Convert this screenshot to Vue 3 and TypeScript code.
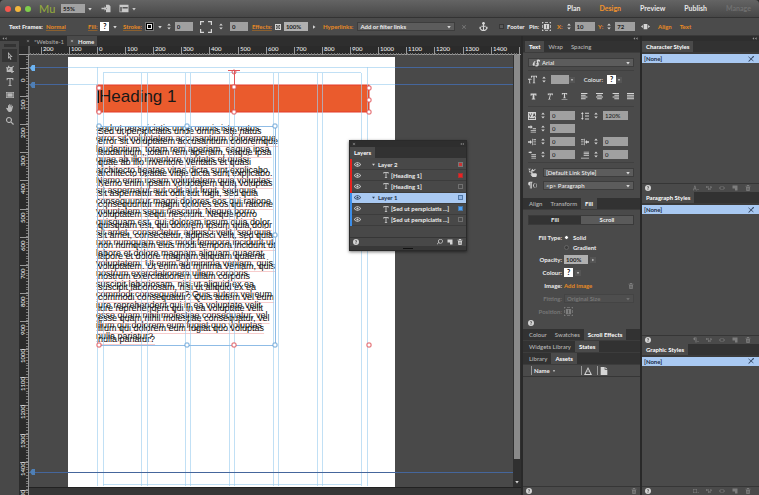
<script setup lang="ts">
import { h, ref } from 'vue'

const icons: Record<string, string> = {
  down: 'M2.5 4h7L6 9z',
  right: 'M4 2.5v7L9 6z',
  step: 'M6 0l3.5 4h-7zM6 12l3.5-4h-7z',
  close: 'M2 3l1-1 3 3 3-3 1 1-3 3 3 3-1 1-3-3-3 3-1-1 3-3z',
  collapse: 'M1 6l4-3v6zM7 6l4-3v6z',
  place: 'M0 5h4V3l3 3-3 3V7H0zM6 1h4l2 2v8H6z',
  browser: 'M0 1h12v10H0V1zm1 3v6h2V4zm3 0v2h7V4z',
  brackets: 'M0 0h4v1.2H1.2V4H0zM8 0h4v4h-1.2V1.2H8zM0 8h1.2v2.8H4V12H0zM10.8 8H12v4H8v-1.2h2.8z',
  checker: 'M0 0h12v12H0zM2 2v3h3V2zm5 0v3h3V2zM4.5 4.5v3h3v-3zM2 7v3h3V7zm5 0v3h3V7z',
  anchor: 'M5.3 3.5a1.8 1.8 0 1 1 1.4 0V5H9v1.2H6.700V10.500c1.600-.3 2.700-1.200 3-2.500L8.600 8l2-2.500L12 8.500h-1.100C10.300 10.800 8.300 12 6 12S1.700 10.800 1.100 8.500H0L1.400 5.500l2 2.500h-1.100c.3 1.300 1.400 2.200 3 2.500V6.200H3V5h2.300z',
  pin: 'M0 0h2v1H1v1H0zM4 0h4v1H4zM10 0h2v2h-1V1h-1zM0 4h1v4H0zM11 4h1v4h-1zM0 10h1v1h1v1H0zM4 11h4v1H4zM11 10h1v2h-2v-1h1zM2.500 2.500h7v7h-7zm3 1v5h1v-5z',
  stretch: 'M0 6l2.500-2v4zM12 6L9.500 4v4zM3.500 2.500h5v7h-5z',
  arrow: 'M3 0l7 7.500H6.500L8.300 11 6.600 12 5 8.300 3 10.500zM4.200 3v4.500l.9-1 .8.2h1.400z',
  crop: 'M3 1h2v2h4L11 1l1 1-2 2v5h2v1.500h-2V12H8v-1.500H1V5H0V3.500h3zM3.500 5l3 0-3 3z',
  type: 'M1 0h10v3.300H9.800L9.300 1.500H6.800v9l1.600.3V12H3.600v-1.200l1.600-.3v-9H2.700L2.200 3.300H1z',
  rect: 'M0 1.500h12v9H0zM1 2.500v7h10v-7zM2 3.500h8v5H2z',
  hand: 'M3 6V2.200c0-1 1.300-1 1.400 0L4.800 5V1c0-1.300 1.500-1.300 1.500 0v4L7 1.500c.2-1 1.500-.8 1.400.2L8 5.500l1.200-2.300c.6-.9 1.600-.3 1.300.6L9 9.500C8.600 11.300 7.700 12 6 12c-2 0-2.700-.7-3.500-2L.3 6.700c-.5-1 .8-1.700 1.500-.8z',
  zoom: 'M4.500 0a4.500 4.500 0 0 1 3.700 7L12 10.600 10.600 12 7 8.200A4.500 4.500 0 1 1 4.500 0zm0 1.600a2.900 2.900 0 1 0 0 5.800 2.900 2.900 0 0 0 0-5.800z',
  size: 'M4 1h8v2.500h-1L10.500 2H8.700v8l1 .3V11H6.300v-.7l1-.3V2H5.500L5 3.500H4zM0 5h4.500v1.700H4L3.500 6H2.800v4.300l.7.200V11H1v-.5l.7-.2V6H1l-.5.7H0z',
  bold: 'M1 1h10v3.500H9.500L9 3H7.500v6.500L9 10v1.200H3V10l1.500-.5V3H3L2.500 4.500H1z',
  italic: 'M3 1h9l-.6 3h-1l-.1-1.600H8.300L6.600 9.700l1.400.4-.2 1H3.500l.2-1 1.400-.4 1.700-7.300H5L4.200 4h-1z',
  under: 'M1.500 0h9v3h-1L9 1.400H7v6.500l1.300.3V9H3.700v-.8L5 7.900V1.400H3L2.500 3h-1zM1 10.500h10v1H1z',
  left: 'M0 0h11v1.500H0zM0 3h8v1.500H0zM0 6h11v1.500H0zM0 9h8v1.500H0z',
  center: 'M0 0h12v1.500H0zM2 3h8v1.500H2zM0 6h12v1.500H0zM2 9h8v1.500H2z',
  rightal: 'M1 0h11v1.500H1zM4 3h8v1.500H4zM1 6h11v1.500H1zM4 9h8v1.500H4z',
  justify: 'M0 0h12v1.500H0zM0 3h12v1.500H0zM0 6h12v1.500H0zM0 9h12v1.500H0z',
  track: 'M0 0h12v12H0zM1 2l2 5h1l2-5H5L3.500 5.500 2 2zm6 5h1l.4-1h1.700l.4 1h1L9.700 2h-.9zM1 9.500L3 8v1h6V8l2 1.500L9 11v-1H3v1z',
  leading: 'M2 0l2 3H2.600v6H4l-2 3-2-3h1.400V3H0zM6 1h6v1.500H6zM6 5.300h6v1.500H6zM6 9.600h6v1.500H6z',
  indent: 'M0 2h4V0l3 3-3 3V4H0zM7 5h5v1.200H7zM4 7.500h8v1.200H4zM4 10h8v1.200H4z',
  marginl: 'M0 5h3V3l3 3-3 3V7H0zM6 1h1v10H6zM8 2h4v1.200H8zM8 5.300h4v1.200H8zM8 8.600h4v1.200H8z',
  marginr: 'M12 5H9V3L6 6l3 3V7h3zM5 1h1v10H5zM0 2h4v1.200H0zM0 5.300h4v1.200H0zM0 8.600h4v1.200H0z',
  before: 'M1 1h3V0l2 2-2 2V3H1zM5 5h7v1.200H5zM5 7.500h7v1.200H5zM5 10h7v1.200H5z',
  after: 'M4 1h8v1.200H4zM4 3.500h8v1.200H4zM4 6h8v1.200H4zM0 10h12v1.300H0z',
  link: 'M0 1l2 1.500L4 1M1 3l2 1 1 2H2zM6 1l1 2 3-2v1L8 4l-2 1-2-1zM4 4h2v3h5l1 2-1 3H6L3 8.500h1.500z',
  para: 'M2.500 1H6v1H5v8H4V2H3.500v8h-1V6C-.5 6-.5 1 2.500 1zM8 3L6.500 6 8 9h1L7.700 6 9 3zM10 3l1.300 3L10 9h.8L12 6l-1.200-3z',
  script: 'M1 8c1-3 2-5 4-5v2H4v5H2L1 9zM6 7c3-1 1-3 1-4 0-2 3-3 5-1v2c-2-1-3-1-3 0s2 2 1 5-5 3-5 1 2 0 3-1-2-1-2-2z',
  trash: 'M4 0h4v1.300h3v1.500H1V1.300h3zM2 4h8l-.7 8H2.700zM4 5.500v5h.8v-5zm3.200 0v5H8v-5z',
  page: 'M1 1h10v10H6V7H1z',
  fold: 'M1 0h6v4h4v8H1zM8 0l3 3H8z',
  warn: 'M6 0l6 12H0zM6 3L2.500 10.500h7zM5.500 5.500h1v2.500h-1z',
  help: 'M6 0a6 6 0 1 1 0 12A6 6 0 0 1 6 0zM3.800 4.500h1.400c0-1.300 1.700-1.200 1.500-.1C6.500 5.300 5 5.500 5.200 7.300h1.400c0-1.400 1.700-1.500 1.600-3.200C8 1.700 4 1.700 3.800 4.500zM5.100 8.200v1.500h1.600V8.200z',
  eye: 'M0 6c3-5 9-5 12 0-3 5-9 5-12 0zm1.600 0c2.200 3.300 6.600 3.300 8.800 0-2.200-3.300-6.600-3.300-8.800 0zM6 4.200a1.800 1.800 0 1 1 0 3.600 1.800 1.800 0 0 1 0-3.600z',
  pencil: 'M0 1h1l5 4 3-4 3-1v2L9 4 7.500 6 11 10v1L6.300 7 2.500 11H0l5-5z',
  charplus: 'M0 11L3 1h1.500l3 10H6L5.200 8.500h-3L1.400 11zM2.600 7.200h2.200L3.700 3.300zM8 8h4v1.200H8z',
  paraplus: 'M3 1h4v10H6V2.200H5V11H4V6.500C0 6.500 0 1 3 1zM8 8h4v1.200H8z',
  boxplus: 'M0 2h8v8H0zM1 3v6h6V3zM9 8h3v1H9z',
  chain: 'M0 2h5v4H0zM1 3v2h3V3zM4 6h5v4H4zM5 7v2h3V7zM9 2l3 2-2 3V5L8 6z',
  clear: 'M3 3L0 6l3 3h1.500L2 6l2.500-3zM9 3l3 3-3 3H7.500L10 6 7.500 3zM4.500 2h3v1h-3zM4.500 9h3v1h-3z',
  find: 'M7 0a4.500 4.500 0 1 1-3.500 7.300L1 11 0 10l2.800-3.500A4.500 4.500 0 0 1 7 0zm0 1.200a3.300 3.300 0 1 0 0 6.600 3.300 3.300 0 0 0 0-6.600z',
}
const Icon = (p: { n: string }) =>
  h('svg', { class: 'ic', viewBox: '0 0 12 12', 'aria-hidden': 'true' }, [
    h('path', { d: icons[p.n], 'fill-rule': 'evenodd' }),
  ])
Icon.props = ['n']

const modes = ['Plan', 'Design', 'Preview', 'Publish', 'Manage']
const tools = ['arrow', 'crop', 'type', 'rect', 'hand', 'zoom']
const tool = ref('arrow')

// 100 document units cover this many screen pixels at the current zoom
const unit = 28.12
const at = (i: number) => Math.round(i * unit)
const topMarks = Array.from({ length: 18 }, (_, k) => ({ x: 97 + at(k - 2), n: Math.abs(k - 2) * 100 }))
const sideMarks = Array.from({ length: 16 }, (_, k) => ({ y: 68 + at(k), n: k * 100 }))
const minor = Array.from({ length: 180 }, (_, k) => at(k / 10))

const guideX = [97, 103, 141, 147, 185, 190, 229, 234, 273, 278, 317, 322, 361, 367]
const redHandles = [[99, 88], [99, 112], [234, 87], [234, 112], [369, 88], [369, 100], [369, 112], [99, 345], [234, 345], [369, 345]]
const blueHandles = [[99, 126], [187, 126], [275, 126], [275, 235], [187, 345], [275, 345]]

const lines = [
  'Sed ut perspiciatis unde omnis iste natus',
  'error sit voluptatem accusantium doloremque',
  'laudantium, totam rem aperiam, eaque ipsa',
  'quae ab illo inventore veritatis et quasi',
  'architecto beatae vitae dicta sunt explicabo.',
  'Nemo enim ipsam voluptatem quia voluptas',
  'sit aspernatur aut odit aut fugit, sed quia',
  'consequuntur magni dolores eos qui ratione',
  'voluptatem sequi nesciunt. Neque porro',
  'quisquam est, qui dolorem ipsum quia dolor',
  'sit amet, consectetur, adipisci velit, sed quia',
  'non numquam eius modi tempora incidunt ut',
  'labore et dolore magnam aliquam quaerat',
  'voluptatem. Ut enim ad minima veniam, quis',
  'nostrum exercitationem ullam corporis',
  'suscipit laboriosam, nisi ut aliquid ex ea',
  'commodi consequatur? Quis autem vel eum',
  'iure reprehenderit qui in ea voluptate velit',
  'esse quam nihil molestiae consequatur, vel',
  'illum qui dolorem eum fugiat quo voluptas',
  'nulla pariatur?',
]

const layers = [
  { name: 'Layer 2', group: true, tone: 'red', mark: 'small' },
  { name: '[Heading 1]', group: false, tone: 'red', mark: 'full' },
  { name: '[Heading 1]', group: false, tone: 'red', mark: '' },
  { name: 'Layer 1', group: true, tone: 'blue', mark: 'small', active: true },
  { name: '[Sed ut perspiciatis ...]', group: false, tone: 'blue', mark: 'full' },
  { name: '[Sed ut perspiciatis ...]', group: false, tone: 'blue', mark: '' },
]

const metrics = [
  { icon: 'track', label: 'Tracking', value: '0' },
  { icon: 'leading', label: 'Leading', value: '120%' },
  { icon: 'indent', label: 'Indent', value: '0' },
  null,
  { icon: 'marginl', label: 'Left margin', value: '0' },
  { icon: 'marginr', label: 'Right margin', value: '0' },
  { icon: 'before', label: 'Space before', value: '0' },
  { icon: 'after', label: 'Space after', value: '0' },
]

const tabRows = [
  { tabs: ['Colour', 'Swatches', 'Scroll Effects'], on: 2 },
  { tabs: ['Widgets Library', 'States'], on: 1 },
  { tabs: ['Library', 'Assets'], on: 1 },
]
const stylePanels = [
  { title: 'Character Styles', icon: 'charplus' },
  { title: 'Paragraph Styles', icon: 'paraplus' },
  { title: 'Graphic Styles', icon: 'boxplus' },
]
</script>

<template>
  <div class="app">
    <header class="title">
      <div class="lights"><i class="r"></i><i class="y"></i><i class="g"></i></div>
      <span class="logo">Mu</span>
      <span class="pick zoompick"><select aria-label="Zoom"><option>55%</option></select><Icon n="down" /></span>
      <button class="plain" aria-label="Place"><Icon n="place" /></button>
      <button class="plain" aria-label="View"><Icon n="browser" /><Icon n="down" /></button>
      <nav>
        <a v-for="m in modes" :key="m" href="#" :class="{ on: m === 'Design', off: m === 'Manage' }">{{ m }}</a>
      </nav>
    </header>

    <div class="control">
      <div><b>Text Frames:</b><a href="#">Normal</a></div>
      <div><a href="#">Fill:</a><button class="swatch" aria-label="Fill colour">?</button><Icon n="down" /></div>
      <div>
        <a href="#">Stroke:</a><button class="swatch dark" aria-label="Stroke colour"><i></i></button><Icon n="down" />
        <button class="step" aria-label="Step stroke"><Icon n="step" /></button><input aria-label="Stroke width" value="0" />
      </div>
      <div class="corner">
        <Icon n="brackets" class="big" />
        <button class="step" aria-label="Step radius"><Icon n="step" /></button><input aria-label="Corner radius" value="0" />
      </div>
      <div><a href="#">Effects:</a><Icon n="checker" /><input aria-label="Effect opacity" class="sel" value="100%" /><Icon n="right" /></div>
      <div class="tight"><a href="#">Hyperlinks:</a><span class="pick wide"><select aria-label="Hyperlink"><option>Add or filter links</option></select><Icon n="down" /></span></div>
      <div class="spread"><Icon n="close" class="dim" /><Icon n="anchor" class="mid" /></div>
      <div><label class="check"><input type="checkbox" />Footer</label></div>
      <div><span>Pin:</span><Icon n="pin" class="mid" /></div>
      <div class="coord"><label class="hot" for="px">X:</label><button class="step" aria-label="Step X"><Icon n="step" /></button><input id="px" value="10" /></div>
      <div class="coord"><label class="hot" for="py">Y:</label><button class="step" aria-label="Step Y"><Icon n="step" /></button><input id="py" value="72" /></div>
      <div class="last"><Icon n="stretch" class="mid" /><a href="#">Align</a><a href="#">Text</a></div>
    </div>

    <main>
      <aside class="tools">
        <div class="strip"><Icon n="collapse" /></div>
        <div class="grip"></div>
        <button v-for="t in tools" :key="t" :class="{ on: t === tool }" :aria-label="t" @click="tool = t"><Icon :n="t" /></button>
      </aside>

      <section class="doc">
        <div class="doctabs">
          <button><Icon n="close" />*Website-1</button>
          <button class="on"><Icon n="close" />Home</button>
        </div>
        <div class="rulers">
          <svg class="ruler top">
            <g transform="translate(-19 0)">
              <path class="line" d="M29 0V9M19 8.500H530" />
              <path v-for="m in minor" :key="m" class="tick" :d="`M${m + 30}.500 7v2`" />
              <g v-for="m in topMarks" :key="m.x">
                <path class="line" :d="`M${m.x}.500 1v8`" />
                <text :x="m.x + 2" y="5">{{ m.n }}</text>
              </g>
            </g>
          </svg>
          <svg class="ruler side">
            <g transform="translate(-19 -55)">
              <path class="line" d="M28.500 55V500" />
              <path v-for="m in minor" :key="m" class="tick" :d="`M26 ${m + 56}.500h2`" />
              <g v-for="m in sideMarks" :key="m.y">
                <path class="line" :d="`M20 ${m.y}.500h8`" />
                <text :transform="`translate(25 ${m.y + 14}) rotate(-90)`">{{ m.n }}</text>
              </g>
            </g>
          </svg>
          <div class="canvas">
            <svg class="layer">
              <g transform="translate(-29 -55)">
                <rect x="68" y="57" width="327" height="430" fill="#fff" />
                <rect x="97" y="85" width="272" height="27" fill="#ea5b2d" stroke="#e43a2a" />
                <rect x="97" y="90" width="2" height="13" fill="#111" />
              </g>
            </svg>
            <h1>Heading 1</h1>
            <div class="copy back"><p v-for="l in lines" :key="l"><span>{{ l }}</span></p></div>
            <div class="copy"><p v-for="l in lines" :key="l"><span>{{ l }}</span></p></div>
            <svg class="layer">
              <g transform="translate(-29 -55)">
                <path v-for="x in guideX" :key="x" class="guide" :d="`M${x}.500 ${x === 97 || x === 367 ? 67 : 73}V486`" />
                <path class="guide" d="M103 72.500H361M103 484.500H361" />
                <path class="guide" d="M68 67.500H395M68 84.500H97M369 84.500H395" />
                <path class="deep" d="M29 67.500H68M29 84.500H68M395 67.500H514M395 84.500H514M29 472.500H514" />
                <path class="frame" d="M97.500 126V345M99 126.500H275.500V345.500H99" />
                <path class="pinline" d="M228 70.500H240M234.500 70V87" />
                <circle class="pinline" cx="234" cy="72" r="2" />
                <g v-for="y in [68, 85, 472]" :key="y">
                  <path :class="y === 68 ? 'knob bright' : 'knob'" :d="`M30 ${y}l2-3h3v6h-3z`" />
                </g>
                <rect v-for="p in redHandles" :key="p.join()" class="hr" :x="p[0] - 2" :y="p[1] - 2" width="4" height="4" rx="1" />
                <rect v-for="p in blueHandles" :key="p.join()" class="hb" :x="p[0] - 2" :y="p[1] - 2" width="4" height="4" rx="1" />
              </g>
            </svg>
          </div>
          <div class="scroll"><i></i><Icon n="down" /></div>
          <div class="status"></div>
        </div>

        <section class="layers">
          <div class="lhead"><Icon n="close" /><Icon n="collapse" /></div>
          <div class="tabs"><button class="on">Layers</button></div>
          <ul>
            <li v-for="(l, i) in layers" :key="i" :class="[l.tone, { active: l.active }]">
              <i class="bar"></i>
              <span class="see"><Icon n="eye" /></span>
              <span class="lname" :class="{ child: !l.group }"><Icon :n="l.group ? 'down' : 'type'" />{{ l.name }}</span>
              <i class="mark" :class="l.mark"></i>
            </li>
          </ul>
          <div class="lfoot"><Icon n="help" /><span></span><Icon n="find" /><Icon n="page" /><Icon n="trash" /></div>
          <div class="lgrip"><i></i></div>
        </section>
      </section>

      <aside class="panels">
        <div class="strip end"><Icon n="collapse" /></div>
        <div class="tabs"><button class="on">Text</button><button>Wrap</button><button>Spacing</button></div>
        <div class="text">
          <span class="pick font"><Icon n="script" /><select aria-label="Font"><option>Arial</option></select><Icon n="down" /></span>
          <hr />
          <div class="row fontrow">
            <Icon n="size" class="mid" /><button class="step" aria-label="Step size"><Icon n="step" /></button>
            <span class="combo"><input aria-label="Font size" /><Icon n="down" class="boxed" /></span>
            <span class="lab">Colour:</span><span class="combo"><button class="swatch" aria-label="Text colour">?</button><Icon n="down" class="boxed" /></span>
          </div>
          <div class="row glyphs">
            <button v-for="g in ['bold', 'italic', 'under', 'left', 'center', 'rightal', 'justify']" :key="g" :aria-label="g"><Icon :n="g" /></button>
          </div>
          <hr />
          <div class="metrics">
            <div v-for="(m, i) in metrics" :key="i">
              <template v-if="m">
                <Icon :n="m.icon" /><button class="step" :aria-label="'Step ' + m.label"><Icon n="step" /></button><input :aria-label="m.label" :value="m.value" />
              </template>
            </div>
          </div>
          <hr />
          <div class="row linkrow"><Icon n="link" class="mid" /><span class="pick"><select aria-label="Link style"><option>[Default Link Style]</option></select><Icon n="down" /></span></div>
          <div class="row linkrow"><Icon n="para" class="mid" /><span class="pick"><select aria-label="Paragraph tag"><option>&lt;p&gt; Paragraph</option></select><Icon n="down" /></span></div>
        </div>
        <div class="tabs"><button>Align</button><button>Transform</button><button class="on">Fill</button></div>
        <div class="fill">
          <div class="seg"><button class="on">Fill</button><button>Scroll</button></div>
          <div class="form">
            <span class="k">Fill Type:</span>
            <div class="radios">
              <label><input type="radio" name="ft" checked />Solid</label>
              <label><input type="radio" name="ft" />Gradient</label>
            </div>
            <label class="k" for="op">Opacity:</label><div class="v"><input id="op" class="sel" value="100%" /><Icon n="right" class="boxed" /></div>
            <span class="k">Colour:</span><div class="v"><button class="swatch" aria-label="Colour">?</button><Icon n="down" class="boxed" /></div>
            <span class="k">Image:</span><div class="v apart"><a href="#">Add image</a><Icon n="trash" class="dim" /></div>
            <label class="k off" for="fit">Fitting:</label><div class="v"><span class="pick off"><select id="fit" disabled><option>Original Size</option></select><Icon n="down" /></span></div>
            <span class="k off">Position:</span><div class="v"><Icon n="pin" class="dim mid" /></div>
          </div>
          <Icon n="help" class="q" />
        </div>
        <div v-for="r in tabRows" :key="r.on + r.tabs[0]" class="tabs">
          <button v-for="(t, i) in r.tabs" :key="t" :class="{ on: i === r.on }">{{ t }}</button>
        </div>
        <div class="cols"><span class="name">Name <Icon n="down" /></span><span><Icon n="warn" /></span><span><Icon n="fold" /></span></div>
        <div class="empty"></div>
        <div class="foot"><Icon n="help" /><span></span><Icon n="trash" class="dim" /></div>
      </aside>

      <aside class="styles">
        <div class="strip end"><Icon n="collapse" /></div>
        <section v-for="s in stylePanels" :key="s.title">
          <div class="tabs"><button class="on">{{ s.title }}</button></div>
          <div class="list"><button class="item">[None]<Icon n="pencil" /></button></div>
          <div class="foot">
            <Icon n="help" /><span></span><Icon :n="s.icon" class="dim" /><Icon n="chain" class="dim" /><Icon n="clear" class="dim" /><Icon n="page" class="dim" /><Icon n="trash" class="dim" />
          </div>
        </section>
      </aside>
    </main>
  </div>
</template>

<style>
body { background: #2b2b2b; overflow: hidden; }
</style>

<style scoped>
* { box-sizing: border-box; }
.app { height: 100vh; display: flex; flex-direction: column; font: 500 6px/9px Lato, "Open Sans", sans-serif; color: #eee; background: #2c2c2c; border-radius: 4px 4px 0 0; overflow: hidden; }
button, input, select { font: inherit; color: inherit; border: 0; padding: 0; margin: 0; background: none; border-radius: 0; outline: 0; }
a { color: #e88a25; text-decoration: none; }
.ic { width: 6px; height: 6px; flex: none; fill: currentColor; display: block; opacity: .85; }
.ic.mid { width: 9px; height: 9px; }
.ic.big { width: 12px; height: 12px; }
.ic.dim { color: #868686; }

.title { flex: 0 0 18px; display: flex; align-items: center; gap: 8px; padding: 0 8px 0 5px; background: linear-gradient(#646464, #474747); border-bottom: 1px solid #333; }
.lights { display: flex; gap: 4px; }
.lights i { width: 6px; height: 6px; border-radius: 50%; }
.lights .r { background: #f4574e; }
.lights .y { background: #f4b73c; }
.lights .g { background: #7fce4b; }
.logo { font-size: 11px; color: #93a83d; width: 14px; }
.pick { display: flex; align-items: center; height: 9px; background: #5c5c5c; border: 1px solid #3d3d3d; padding-right: 2px; min-width: 0; flex: 1; }
.pick select { appearance: none; flex: 1; min-width: 0; height: 7px; line-height: 7px; padding-left: 2px; }
.zoompick { flex: none; width: 32px; background: none; border: 0; padding: 0; gap: 2px; }
.zoompick select { background: #a2a2a2; color: #222; height: 9px; font-weight: bold; }
.plain { display: flex; align-items: center; gap: 2px; color: #ddd; }
.plain .ic:first-child { width: 10px; height: 9px; }
nav { margin-left: auto; display: flex; gap: 19px; font-size: 7px; font-weight: bold; }
nav a { color: #e8e8e8; }
nav a.on { color: #f2932c; }
nav a.off { color: #707070; }

.control { flex: 0 0 18px; display: grid; grid-template-columns: 79px 35px 77px 52px 71px 136px 40px 30px 28px 41px 41px 1fr; padding-left: 9px; background: #4b4b4b; border-bottom: 1px solid #3a3a3a; font-weight: bold; }
.control > div { display: flex; align-items: center; gap: 3px; min-width: 0; }
.control > .corner { gap: 6px; }
.control > .spread { gap: 12px; padding-left: 2px; }
.control > .tight { gap: 4px; padding-right: 4px; }
.control > .last { gap: 8px; padding-left: 2px; }
.control a { text-decoration: underline; text-decoration-color: #8a6030; }
.control .last a, .control .tight a { text-decoration: none; }
input { width: 18px; height: 9px; background: #a0a0a0; color: #222; padding-left: 2px; min-width: 0; }
input.sel { width: 24px; background: #b0b0b0; }
.coord input { width: 20px; }
.hot { color: #e88a25; }
.step { display: flex; color: #eee; }
.step .ic { width: 6px; height: 7px; }
.swatch { width: 9px; height: 9px; background: #fff; color: #000; font-weight: bold; font-size: 7px; line-height: 9px; flex: none; text-align: center; }
.swatch.dark { background: #000; border: 1px solid #777; display: flex; align-items: center; justify-content: center; }
.swatch.dark i { width: 5px; height: 5px; border: 1px solid #eee; }
.check { display: flex; align-items: center; gap: 3px; }
.check input { appearance: none; width: 5px; height: 5px; background: #5a5a5a; border: 1px solid #383838; padding: 0; }

main { flex: 1; min-height: 0; display: grid; grid-template-columns: 19px 1fr 117px 117px; gap: 0 2px; background: #292929; }
.strip { height: 5px; background: #2e2e2e; display: flex; align-items: center; color: #aaa; padding: 0 2px; }
.strip .ic { width: 5px; height: 5px; }
.strip.end { justify-content: flex-end; }
.tools { background: #484848; display: flex; flex-direction: column; align-items: center; margin-right: -2px; border-right: 2px solid #303030; }
.tools .strip { align-self: stretch; }
.grip { width: 12px; height: 3px; background: #333; margin: 3px 0 2px; }
.tools button { width: 15px; height: 13px; display: flex; align-items: center; justify-content: center; color: #ccc; }
.tools button .ic { width: 8px; height: 8px; }
.tools button.on { background: #353535; }

.doc { display: flex; flex-direction: column; min-width: 0; position: relative; margin-left: -2px; }
.doctabs { flex: 0 0 10px; display: flex; padding-left: 4px; background: #2e2e2e; }
.doctabs button { display: flex; align-items: center; gap: 4px; padding: 0 3px; color: #aaa; }
.doctabs button .ic { width: 4px; height: 4px; }
.doctabs .on { background: #4a4a4a; color: #eee; font-weight: bold; }
.rulers { flex: 1; min-height: 0; display: grid; grid-template: 9px 1fr 8px / 10px 1fr 8px; background: #2b2b2b; }
.ruler { display: block; width: 100%; height: 100%; overflow: hidden; fill: #eee; }
.ruler.top { grid-column: 1 / 4; }
.ruler.side { grid-row: 2 / 4; }
.line { stroke: #999; fill: none; }
.tick { stroke: #777; }
.canvas { position: relative; overflow: hidden; background: #494949; }
.layer { position: absolute; inset: 0; width: 100%; height: 100%; }
.scroll { background: #303030; display: flex; flex-direction: column; align-items: center; justify-content: space-between; padding-bottom: 2px; }
.scroll i { width: 6px; height: 94%; background: #8a8a8a; }
.status { grid-column: 2 / 4; background: #363636; border-top: 1px solid #222; }
h1 { position: absolute; left: 70px; top: 32px; margin: 0; font: 17px/20px "Liberation Sans", sans-serif; color: #181818; }
.copy { position: absolute; left: 69px; top: 71px; height: 218px; display: flex; flex-direction: column; justify-content: space-between; font: 9px/10px "Liberation Sans", sans-serif; color: #111; white-space: nowrap; }
.copy.back { left: 67px; top: 68px; }
.copy p { margin: 0; }
.copy span { text-decoration: underline; text-decoration-color: #f0a0a088; text-underline-offset: 2px; text-decoration-thickness: 1px; }
.guide { stroke: #9fd0f0; stroke-opacity: .65; fill: none; }
.deep { stroke: #45669c; }
.frame { stroke: #8fbce6; fill: none; }
.pinline { stroke: #e0555a; fill: none; }
.knob { fill: #4f7fb5; }
.bright { fill: #6db4f2; }
.hr { fill: #fff; stroke: #e0555a; }
.hb { fill: #fff; stroke: #6aa5d8; }

.tabs { flex: 0 0 11px; display: flex; background: #323232; color: #b8b8b8; padding-left: 2px; }
.tabs button { padding: 0 4px; line-height: 11px; }
.tabs .on { background: #4a4a4a; color: #fff; font-weight: bold; }

.layers { position: absolute; left: 330px; top: 104px; width: 118px; height: 111px; display: flex; flex-direction: column; background: #484848; border: 1px solid #2a2a2a; box-shadow: 0 1px 3px #0008; }
.lhead { flex: 0 0 6px; background: #2e2e2e; display: flex; justify-content: space-between; align-items: center; padding: 0 2px; color: #bbb; }
.lhead .ic { width: 4px; height: 4px; }
.layers .tabs { padding-left: 0; flex-basis: 10px; }
.layers ul { list-style: none; margin: 1px 0 11px; padding: 0; flex: 1; display: flex; flex-direction: column; font-weight: bold; }
.layers li { flex: 1; display: flex; align-items: center; border-bottom: 1px solid #3c3c3c; }
.bar { width: 2px; align-self: stretch; background: #e8231f; margin-bottom: -1px; }
.blue .bar { background: #3c8eea; }
.see { width: 19px; padding-left: 2px; }
.see .ic { width: 7px; height: 7px; }
.lname { flex: 1; display: flex; align-items: center; gap: 2px; white-space: nowrap; }
.lname .ic { width: 5px; height: 5px; }
.child { padding-left: 12px; }
.child .ic { width: 6px; height: 6px; }
.layers li.active { background: #a9c9f2; color: #1b2c45; }
.mark { width: 5px; height: 5px; border: 1px solid #707070; margin-right: 3px; }
.mark.small { border-color: #777; background: #c33; }
.mark.full { background: #f02020; border-color: #a33; }
.blue .mark.full { background: #4ba0f5; border-color: #47a; }
.blue .mark.small { background: #8fb4e4; border-color: #5078a8; }
.lfoot, .foot { flex: 0 0 9px; display: flex; align-items: center; gap: 4px; padding: 0 3px; border-top: 1px solid #363636; }
.lfoot span, .foot span { flex: 1; }
.lgrip { flex: 0 0 4px; background: #383838; display: flex; justify-content: center; align-items: center; }
.lgrip i { width: 10px; height: 1px; background: #111; }

.panels, .styles { display: flex; flex-direction: column; min-height: 0; background: #4a4a4a; }
.panels .tabs { flex-basis: 11px; border-bottom: 1px solid #3c3c3c; }
.text { height: 145px; padding: 5px 6px 0 5px; display: flex; flex-direction: column; }
.panels hr { border: 0; border-top: 1px solid #404040; margin: 3px 0; width: 100%; }
.font { flex: 0 0 9px; padding-left: 3px; }
.font .ic:first-child { width: 8px; height: 8px; }
.row { display: flex; align-items: center; gap: 4px; }
.fontrow { height: 11px; }
.combo { display: flex; align-items: center; flex: none; }
.fontrow .lab { flex: 1; text-align: right; }
.fontrow .combo:last-child { margin-right: 12px; }
.boxed { padding: 1px; background: #575757; }
.glyphs { height: 18px; justify-content: space-between; padding: 5px 0 0 2px; }
.glyphs .ic { width: 7px; height: 7px; }
.glyphs button:nth-child(4) { margin-left: 4px; }
.metrics { display: grid; grid-template-columns: 1fr 1fr; gap: 4px 0; padding-top: 1px; }
.metrics > div { display: flex; align-items: center; gap: 4px; height: 9px; }
.metrics .ic { width: 8px; height: 8px; }
.metrics .step .ic, .fontrow .step .ic { width: 6px; height: 7px; }
.metrics input { width: 25px; }
.linkrow { height: 13px; gap: 6px; }
.fill { height: 119px; padding: 5px 6px 0 5px; display: flex; flex-direction: column; }
.seg { display: flex; height: 10px; border: 1px solid #3a3a3a; }
.seg button { flex: 1; background: #5a5a5a; line-height: 8px; font-weight: bold; }
.seg .on { background: #333; }
.form { display: grid; grid-template-columns: 34px 1fr; grid-template-rows: 22px repeat(5, 13px); gap: 0 2px; align-items: center; padding-top: 6px; font-weight: bold; }
.k { text-align: right; align-self: center; }
.form > .k:first-child { align-self: start; padding-top: 2px; }
.k.off, .pick.off { color: #777; }
.pick.off { background: #4e4e4e; border-color: #444; }
.pick.off select { color: #777; opacity: 1; }
.radios { display: flex; flex-direction: column; gap: 1px; }
.radios label { display: flex; align-items: center; gap: 4px; }
.radios input { appearance: none; width: 5px; height: 5px; border-radius: 50%; border: 1px solid #666; background: #3c3c3c; padding: 0; }
.radios input:checked { background: #fff; border-color: #444; }
.v { display: flex; align-items: center; gap: 2px; }
.v.apart { justify-content: space-between; }
.q { margin-top: 2px; }
.cols { flex: 0 0 12px; display: flex; align-items: center; padding-left: 8px; border-bottom: 1px solid #363636; }
.cols span { border-left: 1px solid #999; padding: 0 3px 0 2px; height: 9px; display: flex; align-items: center; margin-right: 2px; }
.cols .name { width: 48px; font-weight: bold; gap: 2px; }
.cols .ic { width: 8px; height: 8px; }
.cols .name .ic { width: 4px; height: 4px; }
.empty { flex: 1; }
.styles section { flex: 1; display: flex; flex-direction: column; min-height: 0; }
.styles .tabs { padding-left: 0; }
.list { flex: 1; border: 1px solid #3a3a3a; border-width: 2px 0 0; }
.item { width: 100%; height: 9px; display: flex; align-items: center; justify-content: space-between; background: #a9c9f2; color: #1b2c45; padding: 0 5px 0 2px; font-weight: bold; }
.styles .foot { gap: 7px; padding-right: 8px; }
</style>
